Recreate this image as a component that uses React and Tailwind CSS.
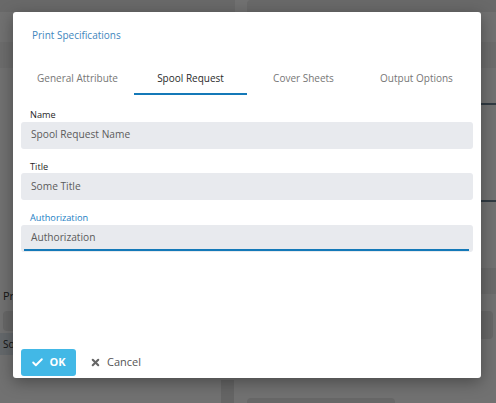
import React from 'react';
import { Check, X } from 'lucide-react';

const tabs = ['General Attribute', 'Spool Request', 'Cover Sheets', 'Output Options'];

const Field = ({ label, value, active }) => (
  <div className="flex flex-col">
    <label className={`pl-[9px] text-[9.2px] leading-[13px] ${active ? 'text-[#1c80c4]' : 'text-[#1f1f1f]'}`}>
      {label}
    </label>
    <div className="relative mt-[0.5px] h-[27px] rounded-[3px] bg-[#e8eaee] flex items-center pl-[10px] text-[10.2px] text-[#5b5b5b]">
      {value}
      {active && <div className="absolute left-[3px] right-[4px] bottom-[1px] h-[2px] bg-[#1479b8]" />}
    </div>
  </div>
);

const App = () => {
  return (
    <div className="relative w-[496px] h-[403px] overflow-hidden bg-[#fafafa]" style={{ fontFamily: '"Open Sans", sans-serif' }}>
      {/* page behind the dialog */}
      <div className="flex gap-[12px] h-[12px]">
        <div className="w-[235px] bg-[#e8e8e8]" />
        <div className="flex-1 bg-[#e8e8e8] rounded-tl" />
      </div>
      <div className="absolute left-0 top-[42px] w-full h-[26px] bg-[#f0f0f0]" />
      <div className="absolute right-0 top-[103px] w-[20px] h-[2px] bg-[#6a8193]" />
      <div className="absolute right-0 top-[200px] w-[20px] h-[2px] bg-[#6a8193]" />
      <div className="absolute right-0 top-[268px] w-[20px] h-[26px] bg-[#ececec]" />
      <div className="absolute left-[3px] top-[288px] text-[11px] text-[#333]">Print</div>
      <div className="absolute left-[3px] top-[311px] w-[20px] h-[20px] rounded bg-[#e4e4e4]" />
      <div className="absolute left-0 top-[333px] w-[20px] h-[22px] bg-[#dde6ee] text-[10px] pl-[3px] leading-[22px] text-[#333]">Some</div>
      <div className="absolute right-[3px] top-[311px] w-[20px] h-[28px] rounded bg-[#e4e4e4]" />
      <div className="absolute left-[221px] top-[380px] w-[13px] h-[23px] bg-[#e0e0e0]" />
      <div className="absolute left-[247px] top-[398px] w-[148px] h-[10px] rounded bg-[#e4e4e4]" />

      {/* overlay */}
      <div className="absolute inset-0 bg-black/55" />

      {/* dialog */}
      <div className="absolute left-[13px] top-[12px] w-[468px] h-[366px] bg-white rounded-[3px] shadow-[0_4px_16px_rgba(0,0,0,0.35)] flex flex-col px-[8px]">
        <div className="pt-[16px] pl-[11px] text-[10px] leading-[14px] text-[#3f86bd]">Print Specifications</div>

        <div className="mt-[22px] grid grid-cols-4">
          {tabs.map((t) => (
            <div
              key={t}
              className={`h-[31px] flex items-center justify-center text-[10px] border-b-2 ${
                t === 'Spool Request' ? 'text-[#2a2a2a] border-[#1479b8]' : 'text-[#767676] border-transparent'
              }`}
            >
              {t}
            </div>
          ))}
        </div>

        <div className="mt-[13px] flex flex-col gap-[11px]">
          <Field label="Name" value="Spool Request Name" />
          <Field label="Title" value="Some Title" />
          <Field label="Authorization" value="Authorization" active />
        </div>

        <div className="mt-auto mb-[2px] flex items-center gap-[14px]">
          <button className="h-[27px] w-[55px] rounded-[3px] bg-[#42b8e6] text-white text-[11px] font-bold flex items-center justify-center gap-[5px]">
            <Check className="w-[13px] h-[13px]" strokeWidth={3.5} />
            OK
          </button>
          <button className="flex items-center gap-[6px] text-[11px] text-[#555]">
            <X className="w-[11px] h-[11px] text-[#666]" strokeWidth={4.5} />
            Cancel
          </button>
        </div>
      </div>
    </div>
  );
};

export default App;
